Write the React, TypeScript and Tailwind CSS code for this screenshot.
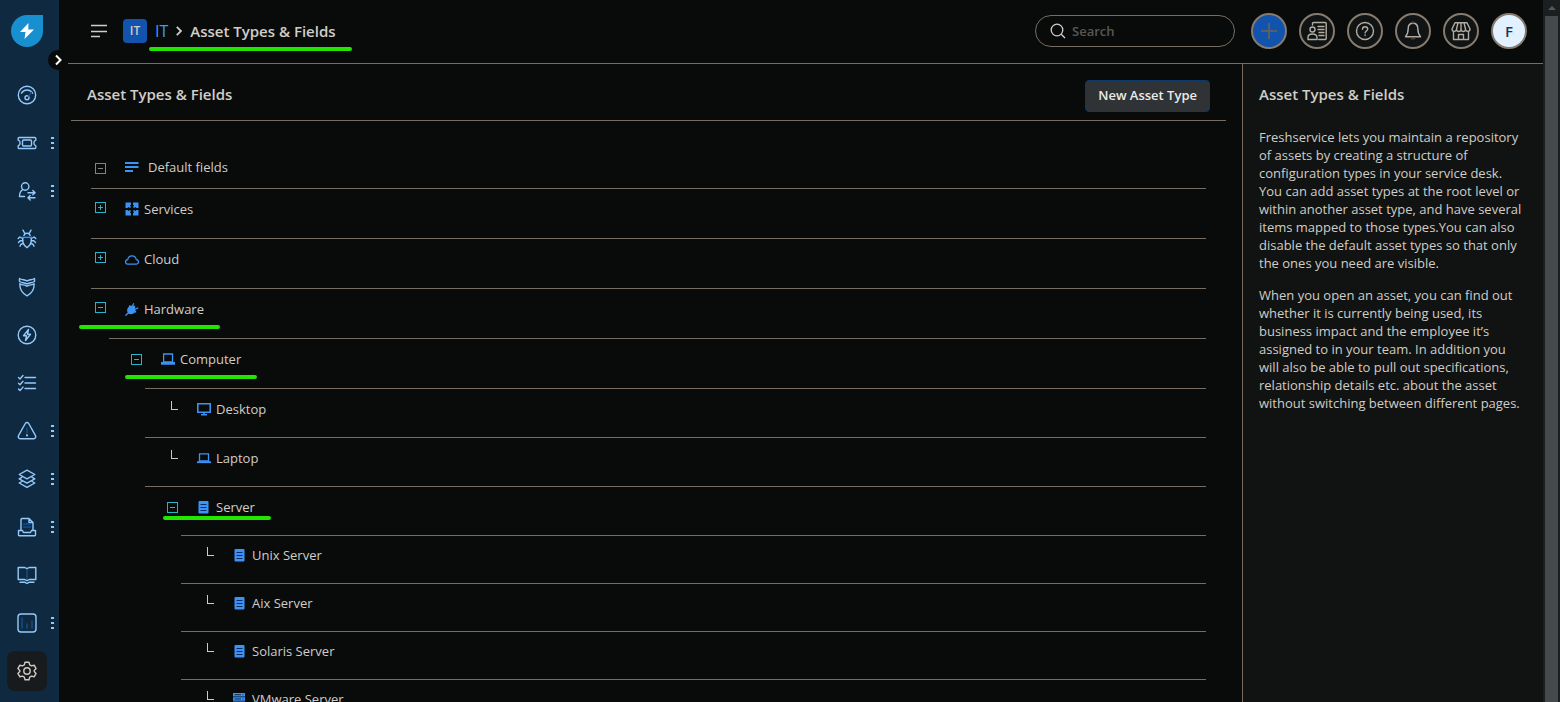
import { ReactNode } from 'react';
import { clsx } from 'clsx';

interface TreeNode {
  name: string;
  icon: keyof typeof TREE_ICONS;
  open?: boolean;
  expandable?: boolean;
  marked?: boolean;
  children?: TreeNode[];
}

interface NavItem {
  label: string;
  icon: ReactNode;
  more?: boolean;
  active?: boolean;
}

const TREE_ICONS = {
  services: (
    <g fill="currentColor">
      <path d="M.5.500h5.500v2L5 3.500 6 5 5 6 3.500 5l-1 1h-2z" />
      <path d="M13.500.500v5.500h-2l-1-1L9 6 8 5l1-1.500-1-1v-2z" />
      <path d="M13.500 13.500H8v-2l1-1L8 9l1-1 1.500 1 1-1h2z" />
      <path d="M.5 13.500V8h2l1 1L5 8l1 1-1 1.500 1 1v2z" />
    </g>
  ),
  cloud: (
    <path
      fill="none"
      stroke="currentColor"
      strokeWidth="1.300"
      strokeLinejoin="round"
      d="M3 12.200a2.300 2.300 0 0 1-.3-4.600C3.200 5.200 4.900 3.800 7 3.800s3.800 1.400 4.300 3.800a2.300 2.300 0 0 1-.3 4.600z"
    />
  ),
  plug: (
    <g fill="none" stroke="currentColor" strokeWidth="1.300" strokeLinecap="round">
      <path fill="currentColor" d="M5 4.500 10 9.300C8.600 11.500 5.300 12.200 3.500 10.700 2 9 2.800 6 5 4.500z" />
      <path fill="currentColor" d="M5.500 4.500h4v4.500z" />
      <path d="M3.500 10.700.8 13.300M7.200 4.500 8.600 1.800M9.900 7.500l2.800-1.500M4.600 4l6 5.800" />
    </g>
  ),
  computer: (
    <g fill="none" stroke="currentColor" strokeWidth="1.300">
      <path d="M2.600 10V2h8.900v8z" />
      <path fill="currentColor" d="M.6 10.600h12.800v1.400H.6z" />
    </g>
  ),
  desktop: (
    <g fill="none" stroke="currentColor" strokeWidth="1.600">
      <path d="M.8 1.800h12.400v8.400H.8z" />
      <path d="M7 10v2.500M4 12.800h6" />
    </g>
  ),
  laptop: (
    <g fill="none" stroke="currentColor" strokeWidth="1.300">
      <path d="M2.500 10V2.800h9V10z" />
      <path strokeWidth="1.800" d="M0 11.200h14" />
    </g>
  ),
  server: (
    <g>
      <rect x="1.500" y="1" width="10" height="12.500" rx="1" fill="currentColor" />
      <path stroke="#082c66" strokeWidth="1" d="M3.500 4.500h6M3.500 7.500h6M3.500 10.500h6" />
    </g>
  ),
  rack: (
    <g>
      <path fill="currentColor" d="M0 1h12v3.500H0zM0 5.300h12v3.500H0zM0 9.600h12v3.500H0z" />
      <path stroke="#082c66" d="M1.500 2.700h6.500M1.500 7h6.500M1.500 11.300h6.500M9.500 2.700h1M9.500 7h1M9.500 11.300h1" />
    </g>
  ),
};

const ASSET_TYPES: TreeNode[] = [
  { name: 'Services', icon: 'services', expandable: true },
  { name: 'Cloud', icon: 'cloud', expandable: true },
  {
    name: 'Hardware',
    icon: 'plug',
    expandable: true,
    open: true,
    marked: true,
    children: [
      {
        name: 'Computer',
        icon: 'computer',
        expandable: true,
        open: true,
        marked: true,
        children: [
          { name: 'Desktop', icon: 'desktop' },
          { name: 'Laptop', icon: 'laptop' },
          {
            name: 'Server',
            icon: 'server',
            expandable: true,
            open: true,
            marked: true,
            children: [
              { name: 'Unix Server', icon: 'server' },
              { name: 'Aix Server', icon: 'server' },
              { name: 'Solaris Server', icon: 'server' },
              { name: 'VMware Server', icon: 'rack' },
            ],
          },
        ],
      },
    ],
  },
];

const NAV_ITEMS: NavItem[] = [
  {
    label: 'Dashboard',
    icon: (
      <>
        <circle cx="10" cy="10" r="8.700" />
        <path d="M4.500 8.200C6.800 4 13.200 4 15.500 8.200" />
        <circle cx="10" cy="12.800" r="2" />
        <path stroke="#12508f" d="m11.500 11 3-3.500" />
      </>
    ),
  },
  {
    label: 'Tickets',
    more: true,
    icon: (
      <>
        <path d="M2.200 4.500h15.600a1 1 0 0 1 1 1v1.700a3 3 0 0 0 0 5.600v1.700a1 1 0 0 1-1 1H2.200a1 1 0 0 1-1-1v-1.700a3 3 0 0 0 0-5.600V5.500a1 1 0 0 1 1-1z" />
        <rect x="5.500" y="7" width="9" height="6" rx="1" />
      </>
    ),
  },
  {
    label: 'Onboarding',
    more: true,
    icon: (
      <>
        <circle cx="8.200" cy="5.500" r="3.700" />
        <path d="M5.800 8.500C3.500 10 2.500 12 2.500 15.500h5M11 11.800h7M15.800 9.500l2.300 2.300-2.300 2M18 16.800h-7M13.200 14.500l-2.300 2.300 2.300 2.200" />
      </>
    ),
  },
  {
    label: 'Problems',
    icon: (
      <>
        <path d="M5.800 8.200h8.400c.6 4.500-1.200 8.800-4.200 10.500-3-1.700-4.800-6-4.200-10.500z" />
        <path d="M7 8C6.500 5.800 8 4.200 10 4.200s3.500 1.600 3 3.800M7.800 4.500 6 1.200M12.200 4.500 14 1.200M5.700 9.500 2.800 8 1.200 9.500M5.800 11.800H3.200l-1.700 1.700M6.500 14.200l-2.700 1.300-.8 1.700M14.300 9.500 17.200 8l1.600 1.500M14.200 11.800h2.600l1.700 1.700M13.500 14.200l2.700 1.300.8 1.700" />
        <path stroke="#12508f" d="M5 7.800h10" />
      </>
    ),
  },
  {
    label: 'Changes',
    icon: (
      <>
        <path d="M2.500 1.500C5 3.400 7.500 2 10 4c2.500-2 5-.6 7.500-2.500v3C15 6.400 12.500 5 10 7 7.500 5 5 6.400 2.500 4.500z" />
        <path d="M2.800 6.800C5 8.400 7.500 7.200 10 9.200c2.500-2 5-.8 7.200-2.400 0 5.700-2.400 9.700-7.200 12-4.800-2.300-7.200-6.300-7.200-12z" />
      </>
    ),
  },
  {
    label: 'Releases',
    icon: (
      <>
        <circle cx="10" cy="10" r="8.800" />
        <path d="m11.500 4.500-5 6.300h3l-1 4.700 5-6.300h-3z" />
      </>
    ),
  },
  {
    label: 'Tasks',
    icon: <path d="M8 4.500h10.500M8 10h10.500M8 15.500h10.500M1.500 4.500 3 6l3-3.500M1.500 10.300 3 11.800l3-3.500M1.500 16.100 3 17.600l3-3.500" />,
  },
  {
    label: 'Alerts',
    more: true,
    icon: (
      <>
        <path d="M8.300 2.500a2 2 0 0 1 3.400 0l6.800 12.200a2 2 0 0 1-1.700 3H3.200a2 2 0 0 1-1.700-3z" />
        <path stroke="#12508f" d="M10 7v5" />
        <path strokeWidth="2" d="M10 14.200v.4" />
      </>
    ),
  },
  {
    label: 'Assets',
    more: true,
    icon: (
      <path d="m10 1.200 7.800 4.300-7.800 4.300-7.800-4.300zM4.800 8.300 2.200 9.800l7.800 4.300 7.800-4.300-2.600-1.500M4.800 12.500l-2.600 1.500 7.800 4.300 7.800-4.300-2.600-1.500" />
    ),
  },
  {
    label: 'Purchase orders',
    more: true,
    icon: (
      <>
        <path d="M4 12.500V2.500a1 1 0 0 1 1-1h7l4 4v7M12 1.500v4h4M1.500 13.500h4l1 2h7l1-2h4V18a.8.800 0 0 1-.8.800H2.300a.8.800 0 0 1-.8-.8z" />
        <path stroke="#12508f" d="M6.500 7h7M6.500 10h7" />
      </>
    ),
  },
  {
    label: 'Solutions',
    icon: (
      <>
        <path d="M1.200 2.500h6.600L10 3.700l2.200-1.200h6.600v12h-6.600L10 15.700l-2.200-1.200H1.200z" />
        <path d="M3 17.300h5l2 1.200 2-1.200h5" />
        <path stroke="#12508f" d="M10 4.500v9.500" />
      </>
    ),
  },
  {
    label: 'Analytics',
    more: true,
    icon: (
      <>
        <rect x="1" y="1" width="18" height="18" rx="3" />
        <path stroke="#12508f" d="M5 5v10M10 11v4M15 8v7" />
      </>
    ),
  },
  {
    label: 'Admin',
    active: true,
    icon: (
      <>
        <path d="M8 1.300h4l.7 2.600 1.800 1 2.600-.7 2 3.400-1.900 1.900v1l1.900 1.900-2 3.400-2.600-.7-1.800 1-.7 2.600H8l-.7-2.600-1.800-1-2.600.7-2-3.400 1.900-1.900v-1L.9 7.600l2-3.400 2.600.7 1.800-1z" />
        <circle cx="10" cy="10" r="3.200" />
      </>
    ),
  },
];

const HEADER_ACTIONS: { label: string; icon: ReactNode }[] = [
  {
    label: 'Contacts',
    icon: (
      <>
        <path d="M5.500 4V2.500a1 1 0 0 1 1-1h11.700a1 1 0 0 1 1 1v15a1 1 0 0 1-1 1h-6.500M11 5.500h6M11 8.500h6M12 11.500h5M12 14.500h5" />
        <circle cx="5.500" cy="8.500" r="2.500" />
        <path d="M1 18.500v-2.300c0-2 1.700-3.200 4.500-3.200s4.500 1.200 4.500 3.200v2.300z" />
      </>
    ),
  },
  {
    label: 'Help',
    icon: (
      <>
        <circle cx="10" cy="10" r="8.500" />
        <path d="M7.500 8.200c0-3.400 5.200-3.200 5.200-.2 0 1.900-2.600 2-2.600 3.900M10.100 14v.6" />
      </>
    ),
  },
  {
    label: 'Notifications',
    icon: (
      <>
        <path d="M10 2.300c-3 0-4.800 2.200-4.800 5.200 0 4-.8 6-2.700 8.300h15c-1.900-2.300-2.700-4.300-2.700-8.300 0-3-1.800-5.200-4.800-5.200z" />
        <path stroke="#444441" d="M10 .5v1.500M8 17c.5 1.300 3.500 1.300 4 0" />
      </>
    ),
  },
  {
    label: 'Marketplace',
    icon: (
      <>
        <path d="M4 1.800h12l3 6.200c0 3-4.200 3.300-4.500.3-.3 3-4.200 3-4.500 0-.3 3-4.200 3-4.500 0C5.200 11.300 1 11 1 8zM7 1.800 5.500 8M10 1.800V8M13 1.800 14.500 8" />
        <path d="M2.500 10.800v7.700h15v-7.700M7.500 18.500v-5h5v5" />
      </>
    ),
  },
];

const HELP_TEXT = [
  'Freshservice lets you maintain a repository of assets by creating a structure of configuration types in your service desk. You can add asset types at the root level or within another asset type, and have several items mapped to those types.You can also disable the default asset types so that only the ones you need are visible.',
  'When you open an asset, you can find out whether it is currently being used, its business impact and the employee it’s assigned to in your team. In addition you will also be able to pull out specifications, relationship details etc. about the asset without switching between different pages.',
];

// row and marker styles by tree depth
const ROW_STYLES = [
  'h-[50px] pt-[10px] pl-1',
  'h-[50px] pt-[10px] pl-[22px]',
  'h-[49px] pt-[10px] pl-[22px]',
  'h-12 pt-[9px] pl-[22px]',
];
const MARKER_STYLES = ['top-[26px] -right-4 -left-4', 'top-[26px] -right-4 -left-1.5', 'top-[19px] -right-4 -left-1'];

function LineIcon({ children }: { children: ReactNode }) {
  return (
    <svg
      className="h-5 w-5"
      viewBox="0 0 20 20"
      fill="none"
      stroke="currentColor"
      strokeWidth={1.4}
      strokeLinecap="round"
      strokeLinejoin="round"
      aria-hidden="true"
    >
      {children}
    </svg>
  );
}

function Marker({ className }: { className: string }) {
  return <span className={clsx('pointer-events-none absolute h-1 rounded-full bg-[#23e600]', className)} />;
}

function Toggle({ open, label, muted }: { open?: boolean; label: string; muted?: boolean }) {
  return (
    <button
      type="button"
      aria-label={label}
      aria-expanded={!!open}
      className={clsx('h-[11px] w-[11px] shrink-0', muted ? 'text-[#8b8175]' : 'text-[#25b4cc]')}
    >
      <svg className="h-full w-full" viewBox="0 0 11 11" fill="none" stroke="currentColor">
        <rect x="0.500" y="0.500" width="10" height="10" />
        <path d={open ? 'M3 5.500h5' : 'M3 5.500h5M5.500 3v5'} />
      </svg>
    </button>
  );
}

function TreeRow({ node, depth }: { node: TreeNode; depth: number }) {
  return (
    <li>
      <div className={clsx('border-t border-[#776c61]', ROW_STYLES[depth])}>
        <div className="relative flex h-5 w-fit items-center">
          <span className={clsx('flex w-[30px] shrink-0', depth === 0 && 'pb-1')}>
            {node.expandable ? (
              <Toggle open={node.open} label={`Toggle ${node.name}`} />
            ) : (
              <span className="mb-2 ml-1 h-[9px] w-[7px] border-b border-l border-[#cfcac4]" />
            )}
          </span>
          <svg className="h-[14px] w-[14px] shrink-0 text-[#3b94f5]" viewBox="0 0 14 14" aria-hidden="true">
            {TREE_ICONS[node.icon]}
          </svg>
          <a href="#" className="pl-[5px] whitespace-nowrap">
            {node.name}
          </a>
          {node.marked && <Marker className={MARKER_STYLES[depth]} />}
        </div>
      </div>
      {node.children && (
        <ul className={depth === 0 ? 'pl-[18px]' : 'pl-9'}>
          {node.children.map((child) => (
            <TreeRow key={child.name} node={child} depth={depth + 1} />
          ))}
        </ul>
      )}
    </li>
  );
}

function Sidebar() {
  return (
    <nav className="relative w-[59px] shrink-0 bg-[#0f2a40]" aria-label="Main">
      <a
        href="#"
        aria-label="Home"
        className="mt-[15px] ml-[11px] flex h-8 w-8 items-center justify-center rounded-full rounded-tr-sm bg-[#188fcf]"
      >
        <svg className="h-4 w-4 text-white" viewBox="0 0 16 16" fill="currentColor" aria-hidden="true">
          <path d="M9.500 0 1 9h5.500L5.500 16 15 6.500H9.300z" />
        </svg>
      </a>
      <ul className="mt-7 flex flex-col gap-2">
        {NAV_ITEMS.map((item) => (
          <li key={item.label} className="flex items-center pl-[7px]">
            <a
              href="#"
              aria-label={item.label}
              className={clsx(
                'flex h-10 w-10 items-center justify-center rounded-lg',
                item.active ? 'bg-[#181b1d] text-[#d0cac1]' : 'text-[#93c9fb]',
              )}
            >
              <LineIcon>{item.icon}</LineIcon>
            </a>
            {item.more && (
              <button type="button" aria-label={`More ${item.label}`} className="ml-1 text-[#93c9fb]">
                <svg className="h-3 w-[3px]" viewBox="0 0 3 12" fill="currentColor">
                  <path d="M0 0h3v2H0zM0 5h3v2H0zM0 10h3v2H0z" />
                </svg>
              </button>
            )}
          </li>
        ))}
      </ul>
      <button
        type="button"
        aria-label="Expand menu"
        className="absolute top-[50px] left-12 z-10 flex h-5 w-5 items-center justify-center rounded-full bg-[#090b0b] text-white"
      >
        <svg className="h-3 w-3" viewBox="0 0 12 12" fill="none" stroke="currentColor" strokeWidth="2">
          <path d="m4 1.500 4.500 4.500L4 10.500" />
        </svg>
      </button>
    </nav>
  );
}

function Header() {
  return (
    <header className="ml-[9px] flex h-16 shrink-0 items-center border-b border-[#776c61] pr-4 pb-px pl-[23px]">
      <button type="button" aria-label="Menu" className="mr-4">
        <svg className="h-4 w-4" viewBox="0 0 16 16" fill="none" stroke="currentColor" strokeWidth="1.500">
          <path d="M0 2.500h16M0 8.500h16M0 13.500h9" />
        </svg>
      </button>
      <span className="flex h-6 w-6 items-center justify-center rounded bg-[#1153ad] text-xs font-semibold">IT</span>
      <div className="relative ml-2 flex items-center text-[15px] leading-5">
        <a href="#" className="text-base leading-5 font-medium text-[#3b9cf5]">
          IT
        </a>
        <svg className="mx-2 h-[10px] w-[6px]" viewBox="0 0 6 10" fill="none" stroke="currentColor" strokeWidth="1.800">
          <path d="m.8.8 4.200 4.200L.8 9.200" />
        </svg>
        <span className="font-semibold">Asset Types &amp; Fields</span>
        <Marker className="top-[26px] -right-4 -left-1.5" />
      </div>
      <label className="ml-auto flex h-8 w-[200px] items-center gap-1.5 rounded-full border border-[#776c61] px-3.5">
        <svg className="h-4 w-4 shrink-0" viewBox="0 0 16 16" fill="none" stroke="currentColor" strokeWidth="1.300">
          <circle cx="7" cy="7" r="5.800" />
          <path d="m11.200 11.200 3.800 3.800" />
        </svg>
        <input
          type="search"
          aria-label="Search"
          placeholder="Search"
          className="w-full min-w-0 bg-transparent pt-0.5 text-[13px] font-semibold outline-none placeholder:text-[#5a5650]"
        />
      </label>
      <div className="ml-4 flex gap-3">
        <button
          type="button"
          aria-label="New"
          className="flex h-9 w-9 items-center justify-center rounded-full border-2 border-[#877b6d] bg-[#1153ad] text-[#55606b]"
        >
          <svg className="h-4 w-4" viewBox="0 0 16 16" stroke="currentColor" strokeWidth="2">
            <path d="M8 0v16M0 8h16" />
          </svg>
        </button>
        {HEADER_ACTIONS.map((action) => (
          <button
            key={action.label}
            type="button"
            aria-label={action.label}
            className="flex h-9 w-9 items-center justify-center rounded-full border-2 border-[#877b6d] bg-[#111415] text-[#b3aca2]"
          >
            <LineIcon>{action.icon}</LineIcon>
          </button>
        ))}
        <button
          type="button"
          className="flex h-9 w-9 items-center justify-center rounded-full border-2 border-[#877b6d] bg-[#e1f1ff] text-[15px] font-semibold text-[#173a5c]"
        >
          F
        </button>
      </div>
    </header>
  );
}

function AssetTypes() {
  return (
    <main className="min-w-0 flex-1 overflow-hidden pr-4 pl-3">
      <div className="flex h-[57px] items-center justify-between border-b border-[#776c61] px-4 pt-2">
        <h1 className="pb-1 text-[15px] leading-5 font-semibold">Asset Types &amp; Fields</h1>
        <button
          type="button"
          className="h-8 rounded-sm border border-[#0c386b] bg-[#2f3336] px-3 text-[13px] font-semibold text-[#eceae6]"
        >
          New Asset Type
        </button>
      </div>
      <div className="px-5 pt-9 text-[13px] leading-5">
        <div className="flex h-[31px] items-start pl-1">
          <span className="flex h-5 w-[30px] items-center pt-0.5">
            <Toggle open muted label="Toggle default fields" />
          </span>
          <svg
            className="mt-[3px] h-[14px] w-[14px] text-[#3b94f5]"
            viewBox="0 0 14 14"
            fill="none"
            stroke="currentColor"
            strokeWidth="1.800"
          >
            <path d="M0 3h13.500M0 7h13.500M0 11h8" />
          </svg>
          <span className="pl-[9px]">Default fields</span>
        </div>
        <ul>
          {ASSET_TYPES.map((node) => (
            <TreeRow key={node.name} node={node} depth={0} />
          ))}
        </ul>
      </div>
    </main>
  );
}

function HelpPanel() {
  return (
    <aside className="w-[301px] shrink-0 border-l border-[#776c61] bg-[#101312] px-4 pt-5">
      <h2 className="mb-6 text-[15px] leading-5 font-semibold">Asset Types &amp; Fields</h2>
      {HELP_TEXT.map((text) => (
        <p key={text} className="mb-[14px] text-[13px] leading-[18px]">
          {text}
        </p>
      ))}
    </aside>
  );
}

export default function App() {
  return (
    <div className="flex h-screen overflow-hidden bg-[#090b0b] font-['Open_Sans',sans-serif] text-[#d1cdc7]">
      <Sidebar />
      <div className="flex min-w-0 flex-1 flex-col">
        <Header />
        <div className="flex min-h-0 flex-1">
          <AssetTypes />
          <HelpPanel />
        </div>
      </div>
      <div className="flex w-[17px] shrink-0 flex-col items-center bg-[#1c1f20]" aria-hidden="true">
        <svg className="h-4 w-2 shrink-0 text-[#55595b]" viewBox="0 0 8 16" fill="currentColor">
          <path d="M4 6l4 4H0z" />
        </svg>
        <div className="w-[13px] flex-1 bg-[#454a4c]" />
      </div>
    </div>
  );
}
